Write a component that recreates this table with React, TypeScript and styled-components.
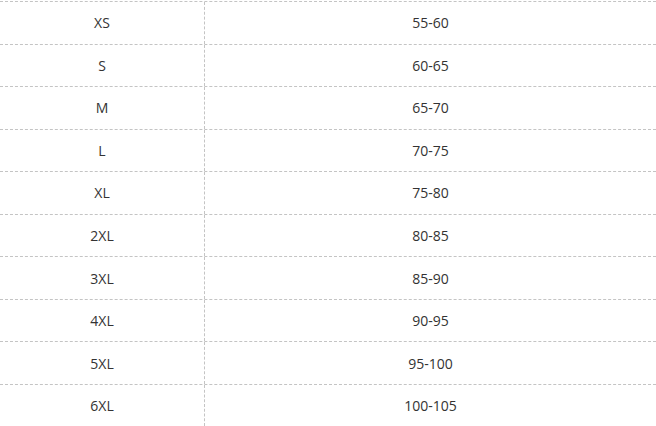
import React from "react";
import styled, { createGlobalStyle } from "styled-components";

const Global = createGlobalStyle`
  html, body { margin: 0; padding: 0; background: #fff; }
  body { padding-top: 1px; font-family: "Open Sans", "Noto Sans", sans-serif; }
`;

const Table = styled.div`
  width: 656px;
  display: flex;
  flex-direction: column;
`;

const Row = styled.div`
  display: grid;
  grid-template-columns: 205px 1fr;
  height: 42.56px;
  box-sizing: border-box;
  border-top: 1px dashed #c4c4c4;
`;

const Cell = styled.div<{ $divider?: boolean }>`
  display: flex;
  align-items: center;
  justify-content: center;
  font-size: 14px;
  color: #333;
  box-sizing: border-box;
  border-right: ${(p) => (p.$divider ? "1px dashed #c4c4c4" : "none")};
`;

const data: [string, string][] = [
  ["XS", "55-60"],
  ["S", "60-65"],
  ["M", "65-70"],
  ["L", "70-75"],
  ["XL", "75-80"],
  ["2XL", "80-85"],
  ["3XL", "85-90"],
  ["4XL", "90-95"],
  ["5XL", "95-100"],
  ["6XL", "100-105"],
];

export default function App() {
  return (
    <>
      <Global />
      <Table>
        {data.map(([size, range]) => (
          <Row key={size}>
            <Cell $divider>{size}</Cell>
            <Cell>{range}</Cell>
          </Row>
        ))}
      </Table>
    </>
  );
}
